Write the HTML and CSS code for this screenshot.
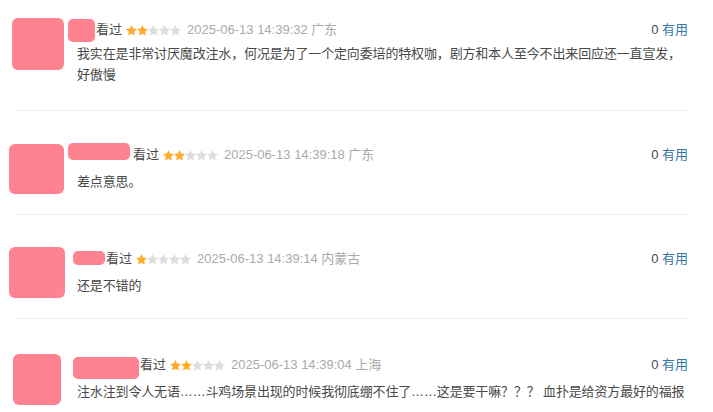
FILE: index.html
```html
<!doctype html>
<html lang="zh-CN">
  <head>
    <meta charset="UTF-8" />
    <meta name="viewport" content="width=device-width, initial-scale=1.0" />
    <title>短评</title>
    <link rel="stylesheet" href="styles.css">
  </head>
  <body>
    <svg class="defs" width="0" height="0">
      <symbol id="star" viewBox="0.5 0.5 23 23">
        <path d="M12 0.5l3.5 7.2 7.9 1.1-5.7 5.6 1.4 7.9L12 18.6l-7.1 3.7 1.4-7.9L0.6 8.8l7.9-1.1z" />
      </symbol>
    </svg>

    <div class="comments">
      <div class="comment">
        <div class="avatar-col"><div class="avatar avatar-a"></div></div>
        <div class="comment-body">
          <div class="comment-info">
            <span class="name name-a"></span>
            <span class="watched">看过</span>
            <span class="rating">
              <svg class="on"><use href="#star" /></svg><svg class="on"><use href="#star" /></svg><svg><use href="#star" /></svg><svg><use href="#star" /></svg><svg><use href="#star" /></svg>
            </span>
            <span class="time">2025-06-13 14:39:32 广东</span>
            <span class="votes">0 <a href="#">有用</a></span>
          </div>
          <p class="comment-text">我实在是非常讨厌魔改注水，何况是为了一个定向委培的特权咖，剧方和本人至今不出来回应还一直宣发，好傲慢</p>
        </div>
      </div>

      <div class="comment">
        <div class="avatar-col"><div class="avatar avatar-b"></div></div>
        <div class="comment-body">
          <div class="comment-info">
            <span class="name name-b"></span>
            <span class="watched">看过</span>
            <span class="rating">
              <svg class="on"><use href="#star" /></svg><svg class="on"><use href="#star" /></svg><svg><use href="#star" /></svg><svg><use href="#star" /></svg><svg><use href="#star" /></svg>
            </span>
            <span class="time">2025-06-13 14:39:18 广东</span>
            <span class="votes">0 <a href="#">有用</a></span>
          </div>
          <p class="comment-text">差点意思。</p>
        </div>
      </div>

      <div class="comment">
        <div class="avatar-col"><div class="avatar avatar-c"></div></div>
        <div class="comment-body">
          <div class="comment-info">
            <span class="name name-c"></span>
            <span class="watched">看过</span>
            <span class="rating">
              <svg class="on"><use href="#star" /></svg><svg><use href="#star" /></svg><svg><use href="#star" /></svg><svg><use href="#star" /></svg><svg><use href="#star" /></svg>
            </span>
            <span class="time">2025-06-13 14:39:14 内蒙古</span>
            <span class="votes">0 <a href="#">有用</a></span>
          </div>
          <p class="comment-text">还是不错的</p>
        </div>
      </div>

      <div class="comment">
        <div class="avatar-col"><div class="avatar avatar-d"></div></div>
        <div class="comment-body">
          <div class="comment-info">
            <span class="name name-d"></span>
            <span class="watched">看过</span>
            <span class="rating">
              <svg class="on"><use href="#star" /></svg><svg class="on"><use href="#star" /></svg><svg><use href="#star" /></svg><svg><use href="#star" /></svg><svg><use href="#star" /></svg>
            </span>
            <span class="time">2025-06-13 14:39:04 上海</span>
            <span class="votes">0 <a href="#">有用</a></span>
          </div>
          <p class="comment-text">注水注到令人无语……斗鸡场景出现的时候我彻底绷不住了……这是要干嘛？？？ 血扑是给资方最好的福报</p>
        </div>
      </div>
    </div>
  </body>
</html>
```

FILE: styles.css
```css
* {
  margin: 0;
  padding: 0;
  box-sizing: border-box;
}

body {
  font-family: 'Liberation Sans', Arial, 'Noto Sans CJK SC', sans-serif;
  font-size: 13px;
  color: #494949;
  background: #fff;
  overflow: hidden;
}

.defs {
  position: absolute;
}

.comments {
  padding: 0 25px 0 14px;
}

.comment {
  display: flex;
  padding: 34px 0 20px;
  border-bottom: 1px solid #eee;
}

.comment:first-child {
  padding-top: 20px;
  padding-bottom: 25px;
}

.comment:last-child {
  padding-top: 36px;
  border-bottom: none;
}

/* avatar column */
.avatar-col {
  flex: 0 0 68px;
  margin-left: -14px;
}

.avatar {
  background: #ff8290;
  border-radius: 6px;
}

.avatar-a {
  width: 52px;
  height: 52px;
  margin: -2px 0 0 12px;
}

.avatar-b {
  width: 55px;
  height: 50px;
  margin: -1px 0 0 9px;
}

.avatar-c {
  width: 56px;
  height: 51px;
  margin: -2px 0 0 9px;
}

.avatar-d {
  width: 48px;
  height: 51px;
  margin: -1px 0 0 13px;
}

.comment-body {
  flex: 1;
  min-width: 0;
}

.comment-info {
  display: flex;
  align-items: flex-start;
  height: 20px;
  line-height: 20px;
  white-space: nowrap;
}

/* redacted user names */
.name {
  display: block;
  flex: none;
  background: #ff8290;
  border-radius: 5px;
  margin-right: 1px;
}

.name-a {
  width: 27px;
  height: 23px;
  margin-top: -1px;
}

.name-b {
  width: 62px;
  height: 17px;
  margin-top: -2px;
  margin-right: 3px;
}

.name-c {
  width: 32px;
  height: 14px;
  margin-top: 2px;
  margin-left: 5px;
}

.name-d {
  width: 66px;
  height: 22px;
  margin-top: 2px;
  margin-left: 5px;
}

.watched {
  color: #494949;
}

.rating {
  display: flex;
  align-items: center;
  height: 20px;
  margin: 0 6px 0 4px;
}

.rating svg {
  width: 11px;
  height: 11px;
  fill: #ddd;
}

.rating svg.on {
  fill: #ffac2d;
}

.time {
  font-size: 13px;
  color: #aaa;
}

.votes {
  margin-left: auto;
  color: #494949;
}

.votes a {
  color: #37a;
  text-decoration: none;
}

.comment-text {
  margin-top: 6px;
  padding-left: 9px;
  line-height: 21px;
  letter-spacing: -0.15px;
}

.comment:first-child .comment-text {
  margin-top: 3px;
}
```
